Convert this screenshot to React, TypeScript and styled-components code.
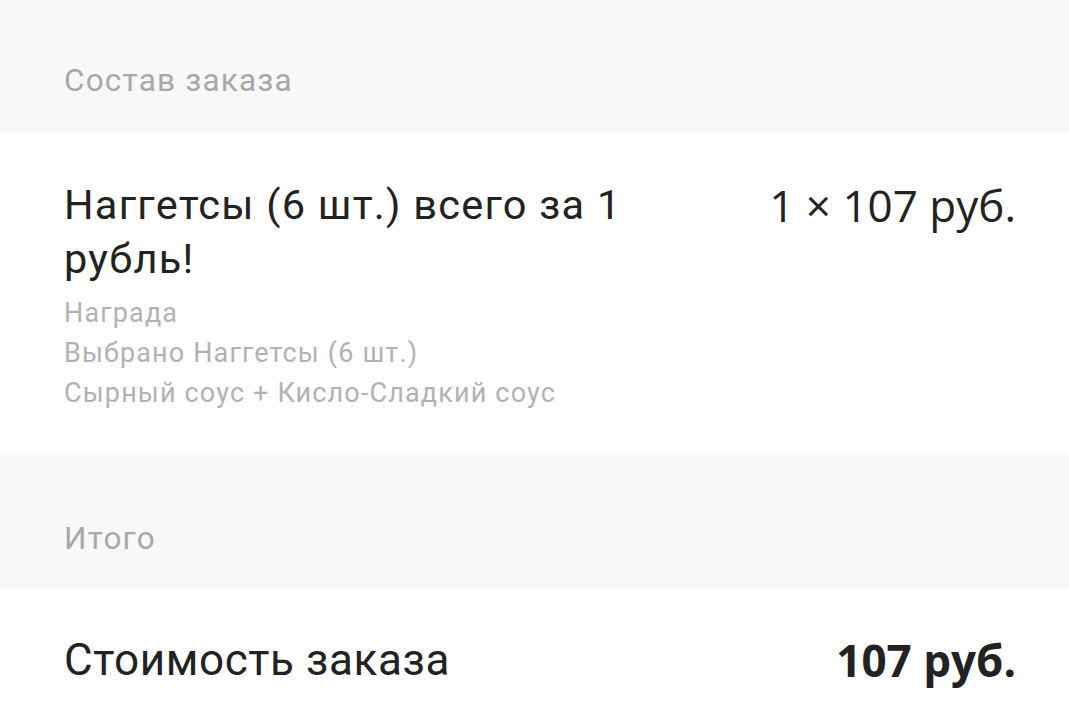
import React from "react";
import styled, { createGlobalStyle } from "styled-components";

const Global = createGlobalStyle`
  html, body { margin: 0; padding: 0; background: #ffffff; }
  body { font-family: Roboto, "Noto Sans", sans-serif; -webkit-font-smoothing: antialiased; }
`;

const Page = styled.div`
  width: 1069px;
  height: 711px;
  overflow: hidden;
  background: #ffffff;
  display: flex;
  flex-direction: column;
`;

const SectionHeader = styled.div<{ $top: number; $bottom: number }>`
  background: #f8f8f8;
  padding: ${(p) => p.$top}px 64px ${(p) => p.$bottom}px;
  font-family: Roboto, sans-serif;
  font-size: 31.5px;
  line-height: 37px;
  letter-spacing: 1.2px;
  color: #a8a8a8;
`;

const ItemBlock = styled.div`
  display: flex;
  justify-content: space-between;
  align-items: flex-start;
  padding: 46px 53px 40px 64px;
  gap: 40px;
`;

const ItemInfo = styled.div`
  display: flex;
  flex-direction: column;
  gap: 7px;
  width: 600px;
`;

const ItemTitle = styled.div`
  font-family: Roboto, sans-serif;
  font-size: 41.5px;
  line-height: 54px;
  letter-spacing: 1.25px;
  color: #222222;
`;

const ItemDetails = styled.div`
  display: flex;
  flex-direction: column;
`;

const Detail = styled.div`
  font-family: Roboto, sans-serif;
  font-size: 27px;
  line-height: 40px;
  letter-spacing: 1.15px;
  color: #b2b2b2;
`;

const Price = styled.div<{ $bold?: boolean }>`
  font-family: "Open Sans", sans-serif;
  font-size: 44px;
  line-height: 54px;
  font-weight: ${(p) => (p.$bold ? 700 : 400)};
  color: #222222;
  white-space: nowrap;
`;

const TotalRow = styled.div`
  display: flex;
  justify-content: space-between;
  align-items: flex-start;
  padding: 45px 53px 0 64px;
`;

const TotalLabel = styled.div`
  font-family: Roboto, sans-serif;
  font-size: 44px;
  line-height: 54px;
  letter-spacing: 0.6px;
  color: #222222;
`;

export default function App() {
  return (
    <Page>
      <Global />
      <SectionHeader $top={62} $bottom={33}>Состав заказа</SectionHeader>
      <ItemBlock>
        <ItemInfo>
          <ItemTitle>Наггетсы (6 шт.) всего за 1 рубль!</ItemTitle>
          <ItemDetails>
            <Detail>Награда</Detail>
            <Detail>Выбрано Наггетсы (6 шт.)</Detail>
            <Detail>Сырный соус + Кисло-Сладкий соус</Detail>
          </ItemDetails>
        </ItemInfo>
        <Price>1 × 107 руб.</Price>
      </ItemBlock>
      <SectionHeader $top={67} $bottom={31}>Итого</SectionHeader>
      <TotalRow>
        <TotalLabel>Стоимость заказа</TotalLabel>
        <Price $bold>107 руб.</Price>
      </TotalRow>
    </Page>
  );
}
